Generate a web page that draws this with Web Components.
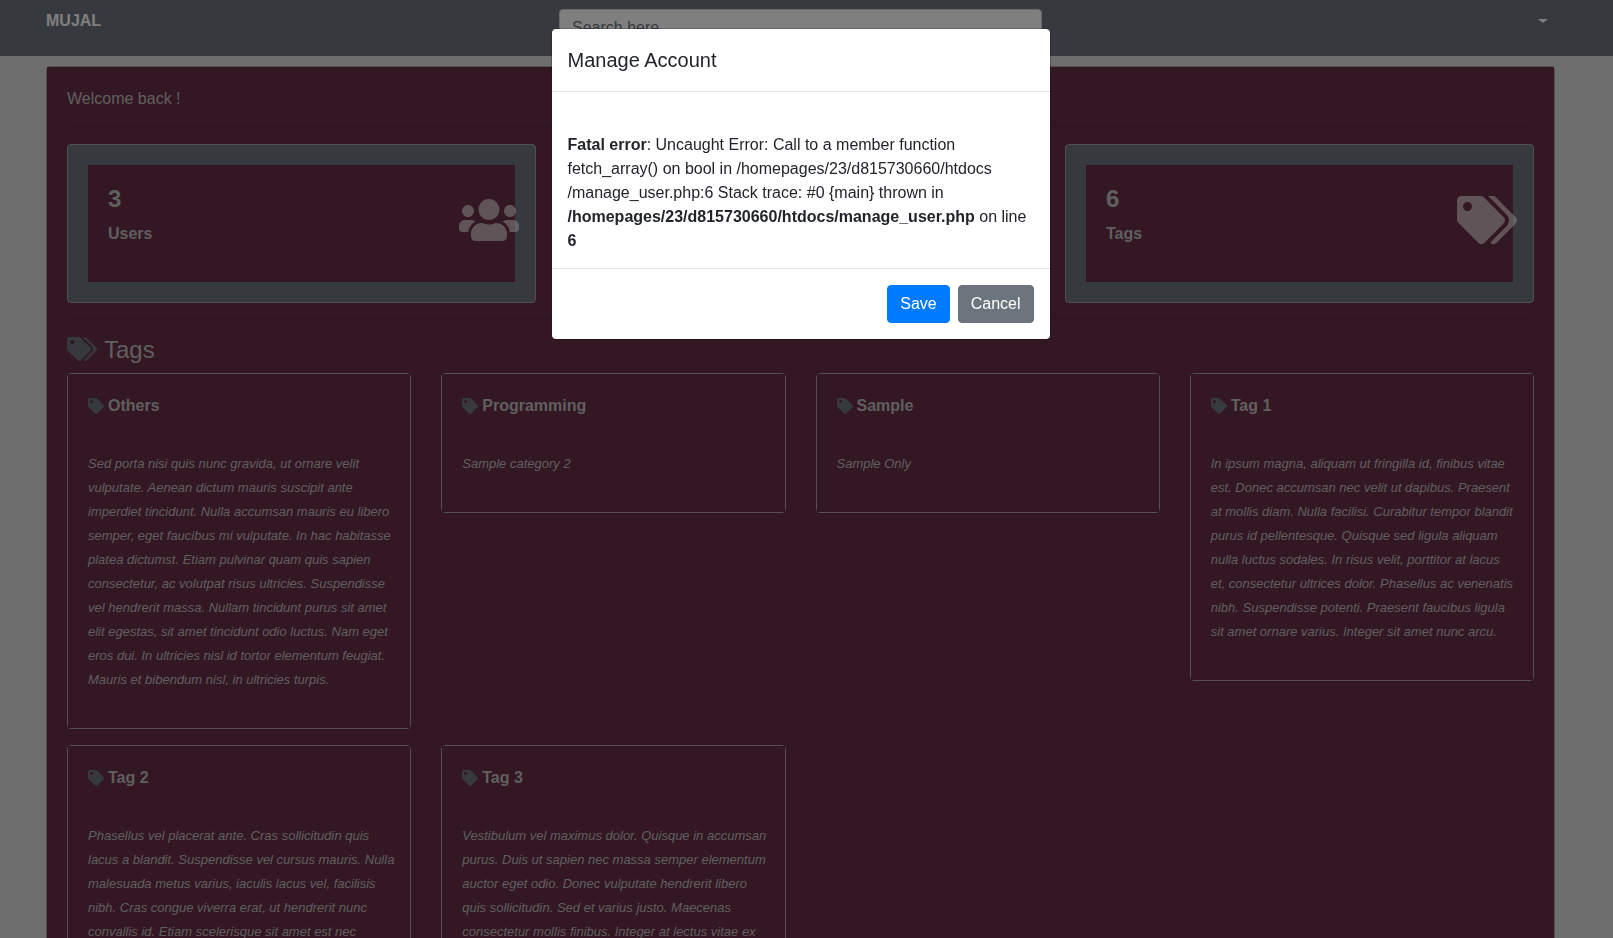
<!DOCTYPE html>
<html lang="en">
<head>
<meta charset="utf-8">
<meta name="viewport" content="width=device-width, initial-scale=1">
<title>Home</title>
<style>
  :root {
    --maroon: #672e45;
    --slate: #6c757d;
    --page: #dcdcdc;
    --text: #bfbfbf;
    --card-border: #a3a3a3;
    --rule: rgba(0, 0, 0, .07);
  }
  * {
    box-sizing: border-box;
  }
  body {
    margin: 0;
    height: 100vh;
    overflow: hidden;
    background: var(--page);
    color: var(--text);
    font-family: "Liberation Sans", Arial, sans-serif;
    font-size: 16px;
    line-height: 24px;
  }
  main {
    padding: 10px 58px 16px 46px;
  }
  .last {
    grid-column: 3;
  }
</style>
</head>
<body>
  <top-bar brand="MUJAL"></top-bar>
  <main>
    <main-panel>
      <span slot="welcome">Welcome back !</span>
      <stat-card slot="stats" icon="users" count="3" label="Users"></stat-card>
      <stat-card slot="stats" class="last" icon="tags" count="6" label="Tags"></stat-card>
      <tag-card name="Others">Sed porta nisi quis nunc gravida, ut ornare velit vulputate. Aenean dictum mauris suscipit ante imperdiet tincidunt. Nulla accumsan mauris eu libero semper, eget faucibus mi vulputate. In hac habitasse platea dictumst. Etiam pulvinar quam quis sapien consectetur, ac volutpat risus ultricies. Suspendisse vel hendrerit massa. Nullam tincidunt purus sit amet elit egestas, sit amet tincidunt odio luctus. Nam eget eros dui. In ultricies nisl id tortor elementum feugiat. Mauris et bibendum nisl, in ultricies turpis.</tag-card>
      <tag-card name="Programming">Sample category 2</tag-card>
      <tag-card name="Sample">Sample Only</tag-card>
      <tag-card name="Tag 1">In ipsum magna, aliquam ut fringilla id, finibus vitae est. Donec accumsan nec velit ut dapibus. Praesent at mollis diam. Nulla facilisi. Curabitur tempor blandit purus id pellentesque. Quisque sed ligula aliquam nulla luctus sodales. In risus velit, porttitor at lacus<br> et, consectetur ultrices dolor. Phasellus ac venenatis nibh. Suspendisse potenti. Praesent faucibus ligula sit amet ornare varius. Integer sit amet nunc arcu.</tag-card>
      <tag-card name="Tag 2">Phasellus vel placerat ante. Cras sollicitudin quis lacus a blandit. Suspendisse vel cursus mauris. Nulla malesuada metus varius, iaculis lacus vel, facilisis nibh. Cras congue viverra erat, ut hendrerit nunc convallis id. Etiam scelerisque sit amet est nec</tag-card>
      <tag-card name="Tag 3">Vestibulum vel maximus dolor. Quisque in accumsan purus. Duis ut sapien nec massa semper elementum auctor eget odio. Donec vulputate hendrerit libero quis sollicitudin. Sed et varius justo. Maecenas consectetur mollis finibus. Integer at lectus vitae ex</tag-card>
    </main-panel>
  </main>
  <modal-box heading="Manage Account">
    <br>
    <b>Fatal error</b>: Uncaught Error: Call to a member function fetch_array() on bool in /homepages/23/d815730660/htdocs<wbr>/manage_user.php:6 Stack trace: #0 {main} thrown in <b>/homepages/23/d815730660/htdocs/manage_user.php</b> on line <b>6</b>
  </modal-box>

<script>
const ICONS = {
  users: {
    width: 640,
    path: "M96 224c35.300 0 64-28.700 64-64s-28.700-64-64-64-64 28.700-64 64 28.700 64 64 64zm448 0c35.300 0 64-28.700 64-64s-28.700-64-64-64-64 28.700-64 64 28.700 64 64 64zm32 32h-64c-17.600 0-33.500 7.100-45.100 18.600 40.300 22.100 68.900 62 75.100 109.400h66c17.700 0 32-14.300 32-32v-32c0-35.300-28.700-64-64-64zm-256 0c61.900 0 112-50.100 112-112S381.900 32 320 32 208 82.100 208 144s50.100 112 112 112zm76.800 32h-8.300c-20.800 10-43.900 16-68.500 16s-47.600-6-68.500-16h-8.300C179.600 288 128 339.600 128 403.200V432c0 26.500 21.500 48 48 48h288c26.500 0 48-21.500 48-48v-28.800c0-63.600-51.600-115.200-115.200-115.200zm-223.700-13.400C161.500 263.100 145.600 256 128 256H64c-35.300 0-64 28.700-64 64v32c0 17.700 14.300 32 32 32h65.900c6.300-47.400 34.900-87.300 75.200-109.400z"
  },
  tag: {
    width: 512,
    path: "M0 252.118V48C0 21.490 21.490 0 48 0h204.118a48 48 0 0 1 33.941 14.059l211.882 211.882c18.745 18.745 18.745 49.137 0 67.882L293.823 497.941c-18.745 18.745-49.137 18.745-67.882 0L14.059 286.059A48 48 0 0 1 0 252.118zM112 64c-26.510 0-48 21.490-48 48s21.490 48 48 48 48-21.490 48-48-21.490-48-48-48z"
  },
  tags: {
    width: 640,
    path: "M497.941 225.941L286.059 14.059A48 48 0 0 0 252.118 0H48C21.490 0 0 21.490 0 48v204.118a48 48 0 0 0 14.059 33.941l211.882 211.882c18.744 18.745 49.136 18.746 67.882 0l204.118-204.118c18.745-18.745 18.745-49.137 0-67.882zM112 160c-26.510 0-48-21.490-48-48s21.490-48 48-48 48 21.490 48 48-21.490 48-48 48zm513.941 133.823L421.823 497.941c-18.745 18.745-49.137 18.745-67.882 0l-.36-.36L527.640 323.522c16.999-16.999 26.360-39.600 26.360-63.640s-9.362-46.641-26.360-63.640L331.397 0h48.721a48 48 0 0 1 33.941 14.059l211.882 211.882c18.745 18.745 18.745 49.137 0 67.882z"
  }
};

class FaIcon extends HTMLElement {
  constructor() {
    super();
    this.attachShadow({ mode: "open" });
  }
  connectedCallback() {
    const icon = ICONS[this.getAttribute("name")];
    this.shadowRoot.innerHTML = `
      <style>
        :host {
          display: block;
          height: 16px;
        }
        svg {
          display: block;
          height: 100%;
        }
      </style>
      <svg viewBox="0 0 ${icon.width} 512" fill="currentColor" aria-hidden="true"><path d="${icon.path}"/></svg>
    `;
  }
}
customElements.define("fa-icon", FaIcon);

class TopBar extends HTMLElement {
  constructor() {
    super();
    this.attachShadow({ mode: "open" });
  }
  connectedCallback() {
    this.shadowRoot.innerHTML = `
      <style>
        * {
          box-sizing: border-box;
        }
        :host {
          display: block;
          background: var(--slate);
        }
        nav {
          display: grid;
          grid-template-columns: repeat(3, 1fr);
          gap: 30px;
          align-items: start;
          padding: 9px 58px 9px 46px;
        }
        a {
          justify-self: start;
          color: #fff;
          font-weight: bold;
          text-decoration: none;
        }
        input {
          display: block;
          width: 100%;
          height: 38px;
          padding: 6px 12px;
          border: 1px solid #ced4da;
          border-radius: 4px;
          background: #fff;
          font: inherit;
        }
        input::placeholder {
          color: #6c757d;
        }
        button {
          display: flex;
          align-items: center;
          justify-self: end;
          height: 24px;
          padding: 0 7px;
          border: 0;
          background: none;
        }
        .caret {
          border: 5px solid transparent;
          border-top: 4px solid #fff;
          border-bottom: 0;
        }
      </style>
      <nav>
        <a href="#">${this.getAttribute("brand")}</a>
        <input type="search" placeholder="Search here" aria-label="Search here">
        <button type="button" aria-label="Account menu"><span class="caret"></span></button>
      </nav>
    `;
  }
}
customElements.define("top-bar", TopBar);

class MainPanel extends HTMLElement {
  constructor() {
    super();
    this.attachShadow({ mode: "open" });
  }
  connectedCallback() {
    this.shadowRoot.innerHTML = `
      <style>
        :host {
          display: block;
          border: 1px solid var(--card-border);
          border-radius: 4px;
          background: var(--card-border);
        }
        .body {
          padding: 20px;
          background: var(--maroon);
        }
        hr {
          margin: 16px 0;
          border: 0;
          border-top: 1px solid var(--rule);
        }
        .stats {
          display: grid;
          grid-template-columns: repeat(3, 1fr);
          gap: 30px;
        }
        h4 {
          display: flex;
          gap: 7px;
          margin: 0 0 9px;
          font-size: 24px;
          font-weight: 400;
          line-height: 28px;
        }
        fa-icon {
          height: 24px;
          margin-top: 1px;
          color: var(--slate);
        }
        .tags {
          display: grid;
          grid-template-columns: repeat(4, 1fr);
          gap: 16px 30px;
          align-items: start;
        }
      </style>
      <div class="body">
        <slot name="welcome"></slot>
        <hr>
        <div class="stats"><slot name="stats"></slot></div>
        <hr>
        <h4><fa-icon name="tags"></fa-icon>Tags</h4>
        <div class="tags"><slot></slot></div>
      </div>
    `;
  }
}
customElements.define("main-panel", MainPanel);

class StatCard extends HTMLElement {
  constructor() {
    super();
    this.attachShadow({ mode: "open" });
  }
  connectedCallback() {
    this.shadowRoot.innerHTML = `
      <style>
        :host {
          display: block;
          position: relative;
          border: 1px solid var(--card-border);
          border-radius: 4px;
          padding: 20px;
          background: var(--slate);
        }
        .body {
          padding: 20px;
          background: var(--maroon);
        }
        h4 {
          margin: 0 0 9px;
          font-size: 24px;
          line-height: 28px;
        }
        p {
          margin: 0 0 16px;
          font-weight: bold;
        }
        /* hangs over the edge of the body */
        fa-icon {
          position: absolute;
          top: 51px;
          right: 16px;
          height: 48px;
          color: #ffffff96;
        }
      </style>
      <div class="body">
        <h4>${this.getAttribute("count")}</h4>
        <p>${this.getAttribute("label")}</p>
      </div>
      <fa-icon name="${this.getAttribute("icon")}"></fa-icon>
    `;
  }
}
customElements.define("stat-card", StatCard);

class TagCard extends HTMLElement {
  constructor() {
    super();
    this.attachShadow({ mode: "open" });
  }
  connectedCallback() {
    this.shadowRoot.innerHTML = `
      <style>
        :host {
          display: block;
          border: 1px solid var(--card-border);
          border-radius: 4px;
        }
        .body {
          padding: 20px;
          background: var(--maroon);
        }
        h5 {
          display: flex;
          align-items: center;
          gap: 4px;
          margin: 0;
          font-size: 16px;
          line-height: 24px;
        }
        fa-icon {
          color: var(--slate);
        }
        hr {
          margin: 16px 0 17px;
          border: 0;
          border-top: 1px solid var(--rule);
        }
        p {
          margin: 0 -5px 16px 0;
          font-size: 13px;
          font-style: italic;
        }
      </style>
      <div class="body">
        <h5><fa-icon name="tag"></fa-icon>${this.getAttribute("name")}</h5>
        <hr>
        <p><slot></slot></p>
      </div>
    `;
  }
}
customElements.define("tag-card", TagCard);

class ModalBox extends HTMLElement {
  constructor() {
    super();
    this.attachShadow({ mode: "open" });
  }
  connectedCallback() {
    this.shadowRoot.innerHTML = `
      <style>
        * {
          box-sizing: border-box;
        }
        :host {
          display: block;
          position: fixed;
          inset: 0;
          padding: 28px 12px 28px 0;
          background: rgba(0, 0, 0, .5);
          color: #212529;
        }
        .content {
          max-width: 500px;
          margin: 0 auto;
          border: 1px solid rgba(0, 0, 0, .2);
          border-radius: 5px;
          background: #fff;
          background-clip: padding-box;
        }
        header {
          padding: 16px;
          border-bottom: 1px solid #dee2e6;
        }
        h5 {
          margin: 0;
          font-size: 20px;
          font-weight: 400;
          line-height: 30px;
        }
        .body {
          padding: 17px 16px 15px;
        }
        footer {
          display: flex;
          justify-content: flex-end;
          gap: 8px;
          padding: 16px;
          border-top: 1px solid #dee2e6;
        }
        button {
          height: 38px;
          padding: 6px 12px;
          border: 1px solid #6c757d;
          border-radius: 4px;
          background: #6c757d;
          color: #fff;
          font: inherit;
        }
        .save {
          border-color: #007bff;
          background: #007bff;
        }
      </style>
      <div class="content" role="dialog" aria-modal="true" aria-labelledby="title">
        <header><h5 id="title">${this.getAttribute("heading")}</h5></header>
        <div class="body"><slot></slot></div>
        <footer>
          <button type="button" class="save">Save</button>
          <button type="button">Cancel</button>
        </footer>
      </div>
    `;
  }
}
customElements.define("modal-box", ModalBox);
</script>
</body>
</html>
